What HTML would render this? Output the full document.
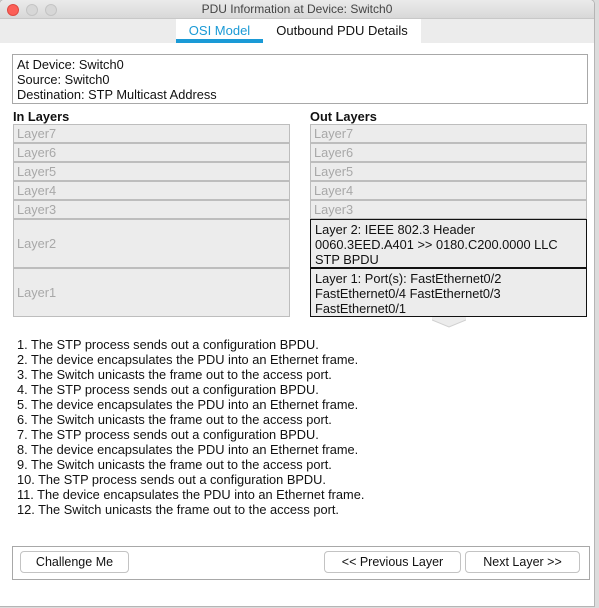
<!DOCTYPE html>
<html><head><meta charset="utf-8"><style>
*{margin:0;padding:0;box-sizing:border-box}
body{width:599px;height:608px;background:#dcdcdc;font-family:"Liberation Sans",sans-serif;font-size:12.8px;color:#111;position:relative;overflow:hidden}
.win{position:absolute;left:0;top:0;width:594px;height:606px;background:#fff;outline:1px solid #b5b5b5;border-radius:4px 4px 0 0;overflow:hidden}
.title{position:absolute;left:0;top:0;width:100%;height:19px;background:linear-gradient(#ebebeb,#d8d8d8);border-bottom:1px solid #c8c8c8;text-align:center;font-size:12px;line-height:19px;color:#444}
.dot{position:absolute;top:4px;width:12px;height:12px;border-radius:50%;background:#d7d7d7;border:1px solid #c4c4c4}
.tabs{position:absolute;left:0;top:19px;width:100%;height:24px;background:#ececec}
.tab{position:absolute;top:0;height:24px;background:#fff;font-size:13px;line-height:23px;text-align:center}
.abs{position:absolute}
.box{position:absolute;border:1px solid #a8a8a8;background:#fff}
.lay{position:absolute;background:#ececec;border:1px solid #bdbdbd;color:#a8a8a8;padding-left:3px;font-size:12.8px}
.act{position:absolute;background:#ececec;border:1px solid #111;padding:2px 4px;font-size:12.8px;line-height:15px;color:#111}
.btn{position:absolute;top:551px;height:22px;border:1px solid #c3c3c3;border-radius:4px;background:#fff;text-align:center;line-height:20px;font-size:12.5px}
</style></head><body>
<div class="win">
<div class="title">PDU Information at Device: Switch0
<span class="dot" style="left:7px;background:#fc5f57;border-color:#de4a42"></span>
<span class="dot" style="left:26px"></span><span class="dot" style="left:45px"></span></div>
<div class="tabs">
<div class="tab" style="left:176px;width:87px;color:#1a9ad6">OSI Model<div class="abs" style="left:0;bottom:0;width:87px;height:4px;background:#1a9ad6"></div></div>
<div class="tab" style="left:263px;width:158px">Outbound PDU Details</div>
</div>
<div class="box" style="left:12px;top:54px;width:576px;height:50px;padding:2px 4px;line-height:15px">At Device: Switch0<br>Source: Switch0<br>Destination: STP Multicast Address</div>
<div class="abs" style="left:13px;top:109px;font-weight:bold">In Layers</div>
<div class="abs" style="left:310px;top:109px;font-weight:bold">Out Layers</div>
<div class="lay" style="left:13px;top:124px;width:277px;height:19px;line-height:17px">Layer7</div>
<div class="lay" style="left:13px;top:143px;width:277px;height:19px;line-height:17px">Layer6</div>
<div class="lay" style="left:13px;top:162px;width:277px;height:19px;line-height:17px">Layer5</div>
<div class="lay" style="left:13px;top:181px;width:277px;height:19px;line-height:17px">Layer4</div>
<div class="lay" style="left:13px;top:200px;width:277px;height:19px;line-height:17px">Layer3</div>
<div class="lay" style="left:13px;top:219px;width:277px;height:49px;line-height:47px">Layer2</div>
<div class="lay" style="left:13px;top:268px;width:277px;height:49px;line-height:47px">Layer1</div>
<div class="lay" style="left:310px;top:124px;width:277px;height:19px;line-height:17px">Layer7</div>
<div class="lay" style="left:310px;top:143px;width:277px;height:19px;line-height:17px">Layer6</div>
<div class="lay" style="left:310px;top:162px;width:277px;height:19px;line-height:17px">Layer5</div>
<div class="lay" style="left:310px;top:181px;width:277px;height:19px;line-height:17px">Layer4</div>
<div class="lay" style="left:310px;top:200px;width:277px;height:19px;line-height:17px">Layer3</div>
<div class="act" style="left:310px;top:219px;width:277px;height:49px">Layer 2: IEEE 802.3 Header<br>0060.3EED.A401 &gt;&gt; 0180.C200.0000 LLC<br>STP BPDU</div>
<div class="act" style="left:310px;top:268px;width:277px;height:49px">Layer 1: Port(s): FastEthernet0/2<br>FastEthernet0/4 FastEthernet0/3<br>FastEthernet0/1</div>
<svg class="abs" style="left:432px;top:317px" width="34" height="11"><polygon points="0,0 34,0 34,3 17,10 0,3" fill="#ececec"/><polyline points="0,3 17,10 34,3" fill="none" stroke="#d0d0d0"/></svg>
<div class="abs" style="left:17px;top:337px;line-height:15px">1. The STP process sends out a configuration BPDU.<br>2. The device encapsulates the PDU into an Ethernet frame.<br>3. The Switch unicasts the frame out to the access port.<br>4. The STP process sends out a configuration BPDU.<br>5. The device encapsulates the PDU into an Ethernet frame.<br>6. The Switch unicasts the frame out to the access port.<br>7. The STP process sends out a configuration BPDU.<br>8. The device encapsulates the PDU into an Ethernet frame.<br>9. The Switch unicasts the frame out to the access port.<br>10. The STP process sends out a configuration BPDU.<br>11. The device encapsulates the PDU into an Ethernet frame.<br>12. The Switch unicasts the frame out to the access port.</div>
<div class="box" style="left:12px;top:546px;width:578px;height:34px"></div>
<div class="btn" style="left:20px;width:109px">Challenge Me</div>
<div class="btn" style="left:324px;width:137px">&lt;&lt; Previous Layer</div>
<div class="btn" style="left:465px;width:115px">Next Layer &gt;&gt;</div>
</div>
</body></html>
